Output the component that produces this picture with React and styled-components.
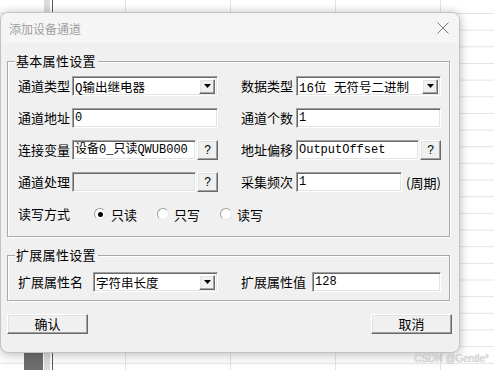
import React from 'react';
import styled, { createGlobalStyle } from 'styled-components';

const Global = createGlobalStyle`
  html, body { margin: 0; padding: 0; background: #fff; }
  body { width: 494px; height: 370px; overflow: hidden; font-family: "Noto Sans CJK SC", "Noto Sans", sans-serif; }
`;

const grid = '#e4e4e4';
const Page = styled.div`
  position: relative;
  width: 494px;
  height: 370px;
  overflow: hidden;
  box-sizing: border-box;
  padding-top: 12px;
  background:
    linear-gradient(#6e6e6e, #6e6e6e) 24px 353px / 19px 17px no-repeat,
    linear-gradient(#dcdcdc, #dcdcdc) 44px 0 / 6px 100% no-repeat,
    linear-gradient(#5a5a5a, #5a5a5a) 52px 0 / 1px 100% no-repeat,
    linear-gradient(${grid}, ${grid}) 125px 0 / 1px 100% no-repeat,
    linear-gradient(${grid}, ${grid}) 230px 0 / 1px 100% no-repeat,
    linear-gradient(${grid}, ${grid}) 335px 0 / 1px 100% no-repeat,
    linear-gradient(${grid}, ${grid}) 440px 0 / 1px 100% no-repeat,
    linear-gradient(to bottom, ${grid} 1px, transparent 1px) 0 13px / 100% 16.67px repeat-y,
    #fff;
`;

const Dialog = styled.div`
  width: 460px;
  height: 341px;
  box-sizing: border-box;
  background: #f0f0f0;
  border: 1px solid #c2c2c2;
  border-radius: 8px;
  box-shadow: 0 0 8px rgba(0, 0, 0, 0.18), 0 4px 14px rgba(0, 0, 0, 0.12);
  display: flex;
  flex-direction: column;
  overflow: hidden;
`;

const TitleBar = styled.div`
  height: 30px;
  flex: none;
  background: #f5f5f5;
  display: flex;
  align-items: center;
  justify-content: space-between;
  padding: 0 10px 0 8px;
  font-size: 12px;
  color: #a0a0a0;
`;

const CloseIcon = styled.svg`
  width: 12px;
  height: 12px;
  display: block;
`;

const Body = styled.div`
  padding: 18px 7px 0 6px;
  display: flex;
  flex-direction: column;
`;

const Group = styled.div`
  position: relative;
  width: 443px;
  box-sizing: border-box;
  border: 1px solid #a8a8a8;
  box-shadow: inset 1px 1px 0 #fff, 1px 1px 0 #fff;
  margin-top: ${p => p.$mt || 0}px;
  padding: ${p => p.$pad};
`;

const Legend = styled.span`
  position: absolute;
  left: 7px;
  top: -10px;
  padding: 0 2px 0 1px;
  background: #f0f0f0;
  font-size: 13px;
  line-height: 18px;
  color: #000;
  letter-spacing: 0.3px;
`;

const FormGrid = styled.div`
  display: grid;
  grid-template-columns: ${p => p.$cols};
  grid-auto-rows: 20px;
  row-gap: 12px;
  align-items: center;
`;

const Label = styled.span`
  font-size: 13px;
  color: #000;
  white-space: nowrap;
  line-height: 20px;
`;

const sunken = `
  box-sizing: border-box;
  border: 1px solid;
  border-color: #a0a0a0 #fff #fff #a0a0a0;
  box-shadow: inset 1px 1px 0 #696969, inset -1px -1px 0 #e3e3e3;
`;

const raised = `
  box-sizing: border-box;
  border: 1px solid;
  border-color: #fff #696969 #696969 #fff;
  box-shadow: inset -1px -1px 0 #a0a0a0, inset 1px 1px 0 #e3e3e3;
  background: #f0f0f0;
`;

const Field = styled.div`
  ${sunken}
  height: 20px;
  width: ${p => (p.$w ? `${p.$w}px` : 'auto')};
  flex: ${p => (p.$w ? 'none' : '1')};
  background: ${p => (p.$disabled ? '#f0f0f0' : '#fff')};
  padding: 0 2px 0 2px;
  font-family: "Liberation Mono", "Noto Sans CJK SC", monospace;
  font-size: 12px;
  line-height: 18px;
  color: #000;
  white-space: nowrap;
  overflow: hidden;
`;

const Combo = styled.div`
  ${sunken}
  height: 20px;
  background: #fff;
  display: flex;
  align-items: center;
  padding: 0 2px 0 2px;
  font-family: "Liberation Mono", "Noto Sans CJK SC", monospace;
  font-size: 12.5px;
  color: #000;
  white-space: nowrap;
`;

const ComboText = styled.span`
  flex: 1;
  overflow: hidden;
  white-space: pre;
`;

const DropBtn = styled.span`
  ${raised}
  width: 16px;
  height: 15px;
  flex: none;
  display: flex;
  align-items: center;
  justify-content: center;
`;

const Pair = styled.div`
  display: flex;
  align-items: center;
  gap: 1px;
`;

const QBtn = styled.span`
  ${raised}
  width: 21px;
  height: 20px;
  flex: none;
  display: flex;
  align-items: center;
  justify-content: center;
  font-family: "Liberation Sans", sans-serif;
  font-size: 12px;
  color: #000;
`;

const Unit = styled.span`
  font-size: 13px;
  margin-left: 3px;
  white-space: nowrap;
`;

const RadioRow = styled.div`
  grid-column: 2 / 6;
  display: flex;
  align-items: center;
  gap: 20px;
  margin-left: 22px;
`;

const RadioItem = styled.label`
  display: flex;
  align-items: center;
  gap: 5px;
  font-size: 13px;
  color: #000;
`;

const RadioCircle = styled.span`
  width: 12px;
  height: 12px;
  box-sizing: border-box;
  border-radius: 50%;
  border: 1px solid;
  border-color: #a0a0a0 #e6e6e6 #e6e6e6 #a0a0a0;
  background: #fff;
  display: flex;
  align-items: center;
  justify-content: center;
  &::after {
    content: '';
    width: 5px;
    height: 5px;
    border-radius: 50%;
    background: ${p => (p.$checked ? '#000' : 'transparent')};
  }
`;

const ButtonRow = styled.div`
  margin-top: 13px;
  display: flex;
  justify-content: space-between;
`;

const PushButton = styled.button`
  ${raised}
  width: 81px;
  height: 20px;
  padding: 0;
  font-family: "Noto Sans CJK SC", sans-serif;
  font-size: 13px;
  color: #000;
  line-height: 18px;
`;

const Watermark = styled.span`
  position: absolute;
  right: 5px;
  bottom: 6px;
  font-family: "Liberation Sans", sans-serif;
  font-size: 10px;
  color: #dadada;
  text-shadow: 0 0 1px rgba(0, 0, 0, 0.3);
`;

const Arrow = () => (
  <svg width="7" height="4" viewBox="0 0 7 4"><path d="M0 0h7L3.5 4z" fill="#000" /></svg>
);

const Select = ({ children }) => (
  <Combo>
    <ComboText>{children}</ComboText>
    <DropBtn><Arrow /></DropBtn>
  </Combo>
);

const Radio = ({ checked, children }) => (
  <RadioItem>
    <RadioCircle $checked={checked} />
    {children}
  </RadioItem>
);

export default function App() {
  return (
    <>
      <Global />
      <Page>
        <Dialog>
          <TitleBar>
            <span>添加设备通道</span>
            <CloseIcon viewBox="0 0 12 12">
              <path d="M0.5 0.5L11.5 11.5M11.5 0.5L0.5 11.5" stroke="#7a7a7a" strokeWidth="1" fill="none" />
            </CloseIcon>
          </TitleBar>
          <Body>
            <Group $pad="14px 0 12px 10px">
              <Legend>基本属性设置</Legend>
              <FormGrid $cols="54px 146px 23px 55px 145px">
                <Label>通道类型</Label>
                <Select>Q输出继电器</Select>
                <span />
                <Label>数据类型</Label>
                <Select>16位 无符号二进制</Select>

                <Label>通道地址</Label>
                <Field>0</Field>
                <span />
                <Label>通道个数</Label>
                <Field>1</Field>

                <Label>连接变量</Label>
                <Pair>
                  <Field>设备0_只读QWUB000</Field>
                  <QBtn>?</QBtn>
                </Pair>
                <span />
                <Label>地址偏移</Label>
                <Pair>
                  <Field>OutputOffset</Field>
                  <QBtn>?</QBtn>
                </Pair>

                <Label>通道处理</Label>
                <Pair>
                  <Field $disabled />
                  <QBtn>?</QBtn>
                </Pair>
                <span />
                <Label>采集频次</Label>
                <Pair>
                  <Field $w={106}>1</Field>
                  <Unit>(周期)</Unit>
                </Pair>

                <Label>读写方式</Label>
                <RadioRow>
                  <Radio checked>只读</Radio>
                  <Radio>只写</Radio>
                  <Radio>读写</Radio>
                </RadioRow>
              </FormGrid>
            </Group>

            <Group $mt={18} $pad="16px 0 8px 10px">
              <Legend>扩展属性设置</Legend>
              <FormGrid $cols="75px 125px 23px 71px 129px">
                <Label>扩展属性名</Label>
                <Select>字符串长度</Select>
                <span />
                <Label>扩展属性值</Label>
                <Field>128</Field>
              </FormGrid>
            </Group>

            <ButtonRow>
              <PushButton>确认</PushButton>
              <PushButton>取消</PushButton>
            </ButtonRow>
          </Body>
        </Dialog>
        <Watermark>CSDN @Gentle°</Watermark>
      </Page>
    </>
  );
}
